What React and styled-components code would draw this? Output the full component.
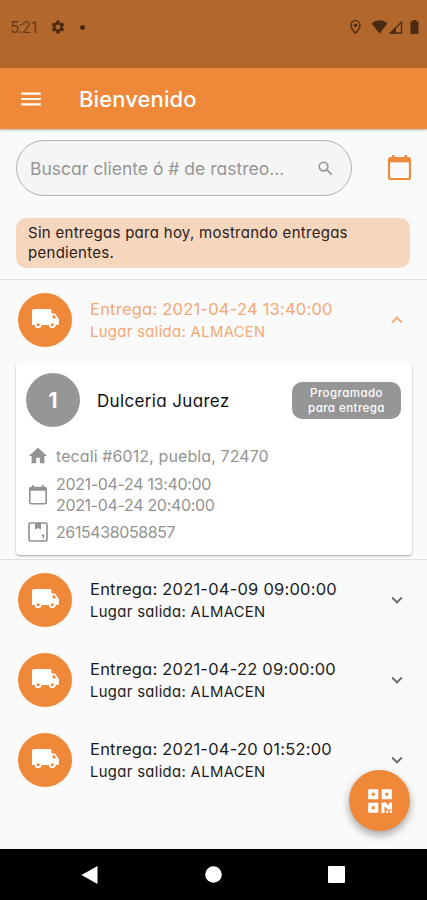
import React from 'react';
import styled, { createGlobalStyle } from 'styled-components';
import {
  MdMenu,
  MdSearch,
  MdHome,
  MdExpandMore,
  MdExpandLess,
  MdSettings,
} from 'react-icons/md';

const GlobalStyle = createGlobalStyle`
  * {
    box-sizing: border-box;
  }
  body {
    margin: 0;
    background: #fafafa;
    font-family: Inter, 'Open Sans', sans-serif;
    font-feature-settings: 'cv11';
  }
`;

const Screen = styled.div`
  position: relative;
  display: flex;
  flex-direction: column;
  width: 427px;
  height: 900px;
  overflow: hidden;
  background: #fafafa;
`;

const StatusBar = styled.div`
  display: flex;
  justify-content: space-between;
  height: 68px;
  padding: 18px 7px 0 10px;
  background: #b2672c;
  color: #4a2a10;
`;

const StatusGroup = styled.div`
  display: flex;
  align-items: center;
  height: 18px;
`;

const Clock = styled.span`
  width: 40px;
  font-family: Roboto, sans-serif;
  font-size: 16px;
  letter-spacing: -0.5px;
  color: #6b3c18;
`;

const Dot = styled.span`
  width: 5px;
  height: 5px;
  margin-left: 14px;
  border-radius: 50%;
  background: currentColor;
`;

const AppBar = styled.header`
  display: flex;
  align-items: center;
  gap: 35px;
  height: 61px;
  padding-left: 18px;
  background: #f0883a;
  color: white;
  box-shadow: 0 1px 2px rgba(0, 0, 0, 0.3);
`;

const Title = styled.h1`
  margin: 0;
  font-size: 22px;
  font-weight: 500;
  letter-spacing: 0.1px;
`;

const SearchRow = styled.div`
  display: flex;
  align-items: center;
  justify-content: space-between;
  height: 56px;
  margin: 11px 16px 0 16px;
  color: #f0883a;
`;

const SearchBox = styled.div`
  display: flex;
  align-items: center;
  justify-content: space-between;
  width: 336px;
  height: 56px;
  padding: 0 16px 0 13px;
  border: 1px solid #b0b0b0;
  border-radius: 28px;
  background: #f5f5f5;
  color: #969696;
  font-size: 17.5px;
  white-space: nowrap;
`;

const Notice = styled.div`
  height: 50px;
  margin: 22px 17px 11px 16px;
  padding: 5px 12px;
  border-radius: 10px;
  background: #f6d6bd;
  color: #2b211b;
  font-size: 15px;
  line-height: 20px;
  letter-spacing: 0.28px;
  white-space: nowrap;
`;

const Divider = styled.div`
  height: 1px;
  background: #e0e0e0;
`;

const Row = styled.div`
  display: flex;
  align-items: center;
  height: 80px;
  padding: 0 19px 0 18px;
  color: ${(props) => (props.$open ? '#f4a874' : '#1c1c1c')};
`;

const Circle = styled.div`
  display: flex;
  align-items: center;
  justify-content: center;
  width: 54px;
  height: 54px;
  border-radius: 50%;
  background: ${(props) => props.$color || '#f0883a'};
  color: white;
  font-size: 21px;
  font-weight: 700;
`;

const RowText = styled.div`
  flex: 1;
  margin-left: 18px;
  padding-top: 1px;
  white-space: nowrap;
`;

const RowTitle = styled.div`
  font-size: 16.5px;
  line-height: 23px;
  letter-spacing: 0.22px;
`;

const RowSubtitle = styled.div`
  font-size: 14.8px;
  line-height: 22px;
  letter-spacing: 0.36px;
`;

const Chevron = styled.div`
  display: flex;
  color: ${(props) => (props.$open ? '#f4a874' : '#6b6b6b')};
`;

const Card = styled.section`
  height: 192px;
  margin: 3px 15px 4px 16px;
  padding: 10px 11px 0 10px;
  border-radius: 4px;
  background: white;
  box-shadow: 0 1px 2px rgba(0, 0, 0, 0.35);
`;

const CardHeader = styled.div`
  display: flex;
  align-items: center;
  height: 54px;
`;

const Client = styled.div`
  flex: 1;
  margin-left: 17px;
  padding-top: 1px;
  color: #111;
  font-size: 17px;
  letter-spacing: 0.35px;
`;

const Badge = styled.div`
  width: 109px;
  height: 37px;
  padding-top: 4px;
  border-radius: 10px;
  background: #969696;
  color: white;
  font-size: 11.5px;
  font-weight: 500;
  line-height: 15px;
  letter-spacing: 0.45px;
  text-align: center;
`;

const Detail = styled.div`
  display: flex;
  align-items: center;
  gap: 8px;
  height: ${(props) => props.$height}px;
  margin-top: ${(props) => props.$top || 0}px;
  color: #939393;
  font-size: 16px;
  line-height: 21px;
  letter-spacing: ${(props) => props.$track}px;
  white-space: nowrap;
`;

const IconSlot = styled.span`
  display: flex;
  justify-content: center;
  width: 22px;
  margin-left: 1px;
  margin-right: -1px;
`;

const Fab = styled.button`
  position: absolute;
  right: 17px;
  bottom: 69px;
  display: flex;
  align-items: center;
  justify-content: center;
  width: 61px;
  height: 61px;
  padding: 0;
  border: 0;
  border-radius: 50%;
  background: #f0883a;
  color: white;
  box-shadow: 0 4px 8px rgba(0, 0, 0, 0.35);
`;

const NavBar = styled.nav`
  display: flex;
  align-items: center;
  justify-content: space-between;
  height: 51px;
  margin-top: auto;
  padding: 0 82px 0 81px;
  background: black;
`;

const TruckIcon = () => (
  <svg width="27" height="22" viewBox="0 0 27 22" fill="currentColor">
    <path d="M2 0h16q1.500 0 1.500 1.500V4.500h2.500q1 0 1.700.9l2.600 3.500q.5.700.5 1.500V16H0V2Q0 0 2 0z" />
    <path d="M20.500 6.300h1.700l2 2.900h-3.700z" fill="#f0883a" />
    <circle cx="6.200" cy="15.800" r="3.400" />
    <circle cx="20.300" cy="15.800" r="3.400" />
    <circle cx="6.200" cy="15.800" r="1.500" fill="#f0883a" />
    <circle cx="20.300" cy="15.800" r="1.500" fill="#f0883a" />
  </svg>
);

const CalendarIcon = ({ size }) => (
  <svg width={size} height={size * 1.09} viewBox="0 0 22 24" fill="none" stroke="currentColor">
    <rect x="1" y="3" width="20" height="20" rx="1.5" strokeWidth="2" />
    <path d="M1 5h20" strokeWidth="4" />
    <path d="M5 0v4M17 0v4" strokeWidth="2.2" />
  </svg>
);

const QrIcon = () => (
  <svg width="24" height="24" viewBox="0 0 24 24" fill="none" stroke="currentColor">
    <path d="M2 2h6.500v6.500H2zM15.500 2H22v6.500h-6.500zM2 15.500h6.500V22H2z" strokeWidth="3.600" />
    <path
      d="M13.500 13.500h4.500l2 2.500h1v-2.500h3v7h-4.500l-2-2.500H16.500v6h-3zM18.500 21.500h2V24h-2zM22 21.500h2V24h-2z"
      fill="currentColor"
      stroke="none"
    />
  </svg>
);

const PackageIcon = () => (
  <svg width="20" height="20" viewBox="0 0 20 20" fill="none" stroke="currentColor" strokeWidth="1.7">
    <rect x="1" y="1" width="18" height="18" rx="1.5" />
    <path d="M7 1h6v6.500l-3-1.500-3 1.500z" fill="currentColor" stroke="none" />
    <path d="M15.500 12.500v4M14 14l1.500-1.500" strokeWidth="1.4" />
  </svg>
);

const StatusIcons = () => (
  <svg width="70" height="18" viewBox="0 0 70 18" fill="currentColor">
    <path
      d="M5.500 2.700c-2.600 0-4.500 2-4.500 4.500 0 3.200 4.500 8 4.500 8s4.500-4.800 4.500-8c0-2.500-1.900-4.500-4.500-4.500z"
      fill="none"
      stroke="currentColor"
      strokeWidth="1.3"
    />
    <circle cx="5.500" cy="7.200" r="1.800" />
    <path d="M21.500 5.500C26 1.300 33 1.300 37.500 5.500L29.500 15.500z" />
    <path d="M40.500 15L51.500 4v11z" fill="none" stroke="currentColor" strokeWidth="1.3" />
    <path d="M39.500 15.500L46 9v6.500z" />
    <path d="M62.500 2h4v1.500h2V16h-8V3.500h2z" />
  </svg>
);

const deliveries = [
  { date: '2021-04-09 09:00:00', place: 'ALMACEN' },
  { date: '2021-04-22 09:00:00', place: 'ALMACEN' },
  { date: '2021-04-20 01:52:00', place: 'ALMACEN' },
];

const Delivery = ({ date, place, open }) => (
  <Row $open={open}>
    <Circle>
      <TruckIcon />
    </Circle>
    <RowText>
      <RowTitle>Entrega: {date}</RowTitle>
      <RowSubtitle>Lugar salida: {place}</RowSubtitle>
    </RowText>
    <Chevron $open={open}>
      {open ? <MdExpandLess size={22} /> : <MdExpandMore size={22} />}
    </Chevron>
  </Row>
);

const App = () => (
  <>
    <GlobalStyle />
    <Screen>
      <StatusBar>
        <StatusGroup>
          <Clock>5:21</Clock>
          <MdSettings size={16} />
          <Dot />
        </StatusGroup>
        <StatusGroup>
          <StatusIcons />
        </StatusGroup>
      </StatusBar>
      <AppBar>
        <MdMenu size={26} />
        <Title>Bienvenido</Title>
      </AppBar>
      <SearchRow>
        <SearchBox>
          Buscar cliente ó # de rastreo...
          <MdSearch size={19} />
        </SearchBox>
        <CalendarIcon size={23} />
      </SearchRow>
      <Notice>
        Sin entregas para hoy, mostrando entregas
        <br />
        pendientes.
      </Notice>
      <Divider />
      <Delivery date="2021-04-24 13:40:00" place="ALMACEN" open />
      <Card>
        <CardHeader>
          <Circle $color="#969696">1</Circle>
          <Client>Dulceria Juarez</Client>
          <Badge>
            Programado
            <br />
            para entrega
          </Badge>
        </CardHeader>
        <Detail $height={22} $top={18} $track={0.1}>
          <IconSlot>
            <MdHome size={22} />
          </IconSlot>
          tecali #6012, puebla, 72470
        </Detail>
        <Detail $height={42} $top={7} $track={-0.33}>
          <IconSlot>
            <CalendarIcon size={18} />
          </IconSlot>
          <div>
            2021-04-24 13:40:00
            <br />
            2021-04-24 20:40:00
          </div>
        </Detail>
        <Detail $height={22} $top={5} $track={-0.4}>
          <IconSlot>
            <PackageIcon />
          </IconSlot>
          2615438058857
        </Detail>
      </Card>
      <Divider />
      {deliveries.map((item) => (
        <Delivery key={item.date} {...item} />
      ))}
      <Fab>
        <QrIcon />
      </Fab>
      <NavBar>
        <svg width="17" height="18" viewBox="0 0 17 18" fill="white">
          <path d="M16.500 0v18L0.500 9z" />
        </svg>
        <svg width="17" height="17" viewBox="0 0 17 17" fill="white">
          <circle cx="8.500" cy="8.500" r="8.300" />
        </svg>
        <svg width="17" height="17" viewBox="0 0 17 17" fill="white">
          <rect width="17" height="17" rx="1" />
        </svg>
      </NavBar>
    </Screen>
  </>
);

export default App;
